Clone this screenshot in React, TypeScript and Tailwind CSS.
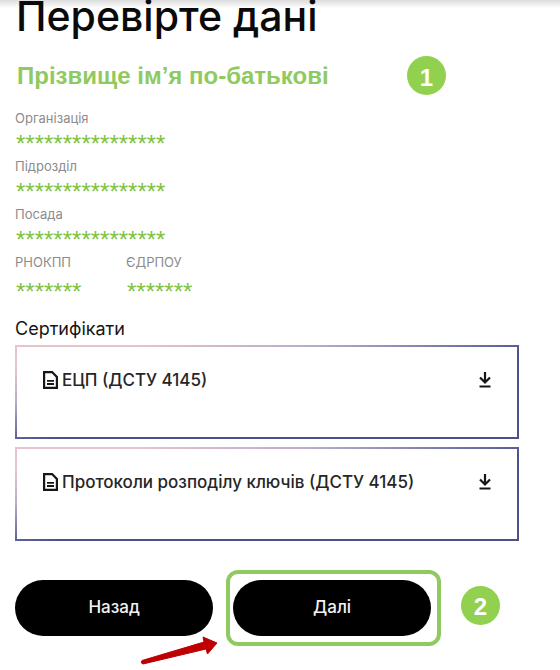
import type { ReactNode } from "react";

const fields = [
  { label: "Організація", value: "****************" },
  { label: "Підрозділ", value: "****************" },
  { label: "Посада", value: "****************" },
];

const codes = [
  { label: "РНОКПП", value: "*******" },
  { label: "ЄДРПОУ", value: "*******" },
];

const certificates = ["ЕЦП (ДСТУ 4145)", "Протоколи розподілу ключів (ДСТУ 4145)"];

function StepBadge({ children }: { children: ReactNode }) {
  return (
    <span className="flex size-[39px] shrink-0 items-center justify-center rounded-full bg-[#92d050] pt-1 font-['Liberation_Sans',sans-serif] text-2xl leading-none font-bold text-white">
      {children}
    </span>
  );
}

function FileIcon() {
  return (
    <svg viewBox="0 0 15 18" className="h-[18px] w-[15px] shrink-0" fill="none" stroke="#161616" strokeWidth="2.2" aria-hidden="true">
      <path d="M1.1 1.1h8L13.9 6v10.9H1.1z" />
      <path d="M4 9.8h7M4 13h7" strokeWidth="1.8" />
    </svg>
  );
}

function DownloadIcon() {
  return (
    <svg viewBox="0 0 12 16" className="h-4 w-3" fill="none" stroke="#161616" strokeWidth="2.2" aria-hidden="true">
      <path d="M6 0v10M1 5.5l5 5 5-5M.5 14.5h11" />
    </svg>
  );
}

function Certificate({ name }: { name: string }) {
  return (
    <li className="flex h-[94px] items-start justify-between border-2 border-transparent pt-[21px] pr-[26px] pl-[26px] [background:linear-gradient(#fff,#fff)_padding-box,linear-gradient(to_bottom_right,#e6c4cd_12%,#b9adc6_30%,#6c70a5_46%,#4c5087_54%)_border-box]">
      <span className="flex items-center gap-1 text-[17px] leading-6 font-medium text-[#262626]">
        <FileIcon />
        {name}
      </span>
      <button type="button" aria-label={`Завантажити ${name}`} className="flex h-6 items-center">
        <DownloadIcon />
      </button>
    </li>
  );
}

function PillButton({ children }: { children: ReactNode }) {
  return (
    <button type="button" className="h-14 w-full rounded-full bg-black text-[17px] font-medium text-[#f2f2f2]">
      {children}
    </button>
  );
}

export default function App() {
  return (
    <main className="bg-white font-[Inter,sans-serif]">
      <div className="bg-linear-to-b from-[#dcdcdc] to-white to-[8px] pl-4">
        <h1 className="h-14 text-[41px] leading-8 font-medium text-[#0a0a0a]">Перевірте дані</h1>
      </div>

      <div className="pr-[41px] pb-5 pl-[15px]">
        <div className="flex items-center justify-between pr-[73px]">
          <h2 className="pl-0.5 font-['Liberation_Sans',sans-serif] text-2xl font-bold text-[#8fca60]">
            Прізвище ім’я по-батькові
          </h2>
          <StepBadge>1</StepBadge>
        </div>

        <dl className="mt-[15px]">
          {fields.map(({ label, value }) => (
            <div key={label} className="h-12">
              <dt className="text-[13px] leading-4 text-[#8c8c8c]">{label}</dt>
              <dd className="pl-px font-['Liberation_Sans',sans-serif] text-2xl leading-9 text-[#7fc241]">{value}</dd>
            </div>
          ))}
          <div className="flex">
            {codes.map(({ label, value }) => (
              <div key={label} className="w-[111px]">
                <dt className="text-[13px] leading-4 text-[#8c8c8c]">{label}</dt>
                <dd className="pt-1 pl-px font-['Liberation_Sans',sans-serif] text-2xl leading-9 text-[#7fc241]">{value}</dd>
              </div>
            ))}
          </div>
        </dl>

        <h3 className="mt-[7px] text-lg leading-6 text-[#161616]">Сертифікати</h3>
        <ul className="mt-1 space-y-2">
          {certificates.map((name) => (
            <Certificate key={name} name={name} />
          ))}
        </ul>

        <div className="relative mt-[29px] flex items-center gap-5 pr-[19px]">
          <div className="grid flex-1 grid-cols-[12fr_13fr] items-center gap-[13px]">
            <PillButton>Назад</PillButton>
            <div className="rounded-xl border-4 border-[#8fca60] py-[6px] pr-[6px] pl-[3px]">
              <PillButton>Далі</PillButton>
            </div>
          </div>
          <div className="pb-1.5">
            <StepBadge>2</StepBadge>
          </div>
          {/* pointer to the next button */}
          <svg viewBox="0 0 78 29" className="absolute top-[66px] left-[125px] h-[29px] w-[78px]" fill="#c00000" stroke="#b80303" strokeWidth="1" strokeLinejoin="round" aria-hidden="true">
            <path d="M2 24.5 64 6l-1-5 14 6-9.500 11-1.500-5L3 28q-3-1-1-3.500z" />
          </svg>
        </div>
      </div>
    </main>
  );
}
